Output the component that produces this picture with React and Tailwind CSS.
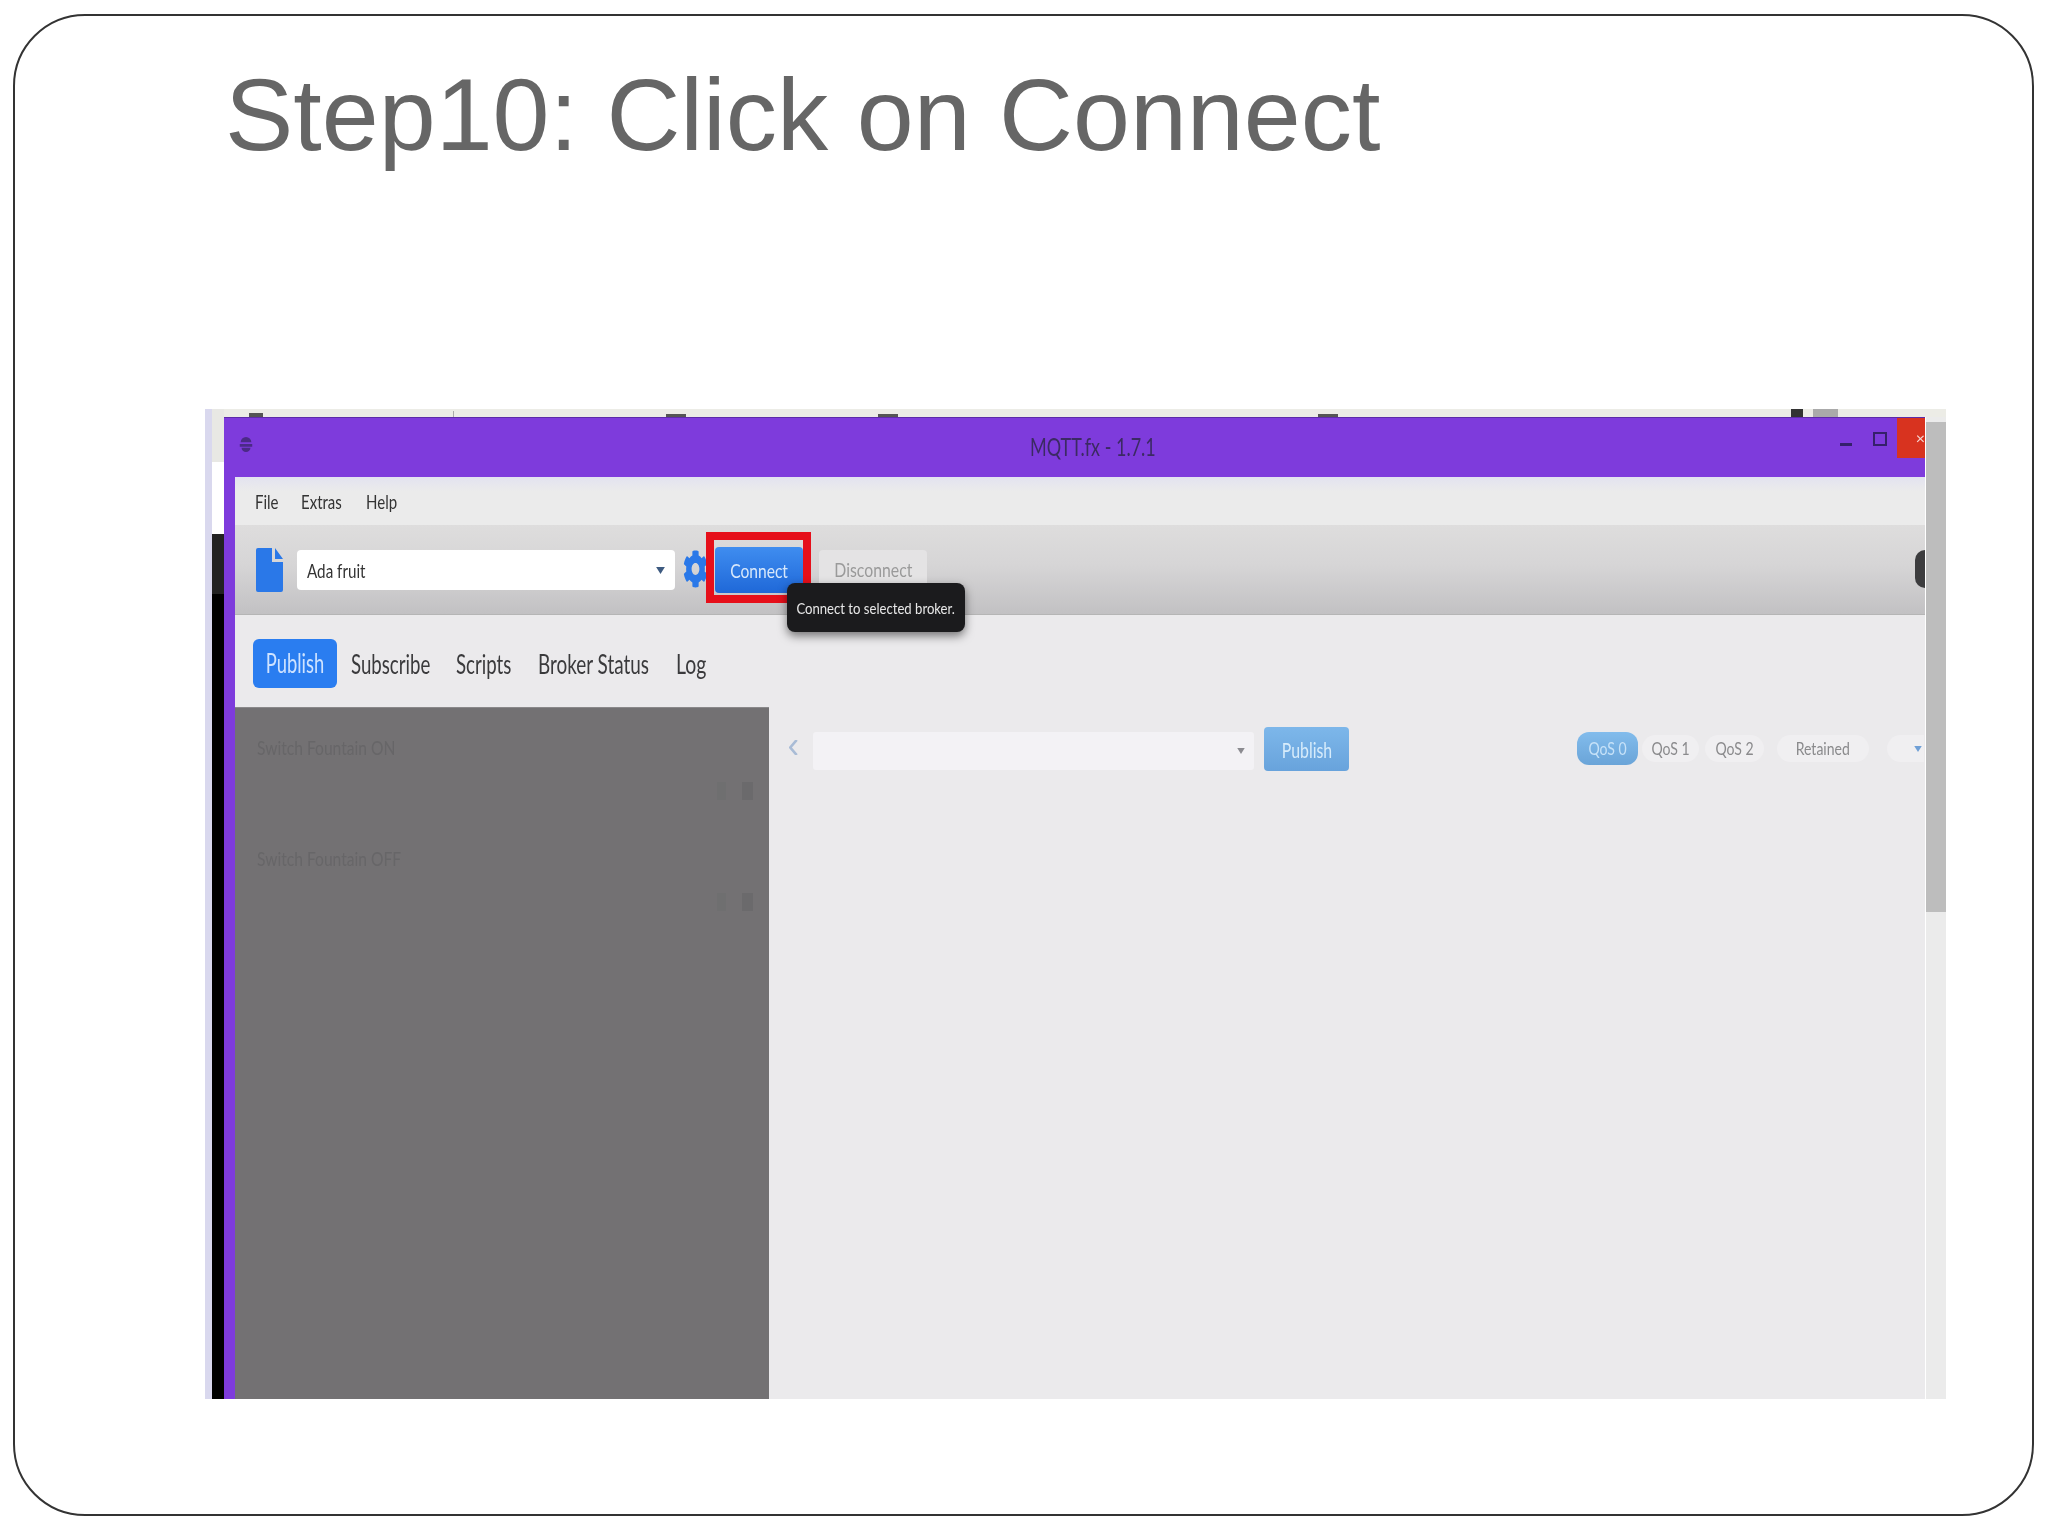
import React from 'react';
import { FaCog } from 'react-icons/fa';

const sans = "font-['Liberation_Sans',Arial,sans-serif]";
const app = "font-['Lato','Open_Sans',sans-serif]";

const Caret = ({ className }) => (
  <svg viewBox="0 0 10 8" className={className}>
    <path d="M0 0h10L5 8z" fill="currentColor" />
  </svg>
);

// the app text in the screenshot is squashed sideways, so the flow width is set by hand
const Squeezed = ({ className, children }) => (
  <span className={`inline-block whitespace-nowrap origin-left ${className}`}>{children}</span>
);

const MenuBar = () => (
  <div className="h-[48px] flex items-center pl-[20px] bg-[linear-gradient(#e3e3f0,#ebebeb_30%)] text-[20px] text-[#333]">
    <Squeezed className="w-[23px] scale-x-[0.75]">File</Squeezed>
    <Squeezed className="w-[43px] ml-[23px] scale-x-[0.75]">Extras</Squeezed>
    <Squeezed className="w-[33px] ml-[22px] scale-x-[0.75]">Help</Squeezed>
  </div>
);

const Toolbar = () => (
  <div className="relative h-[90px] flex items-start pt-[25px] bg-[linear-gradient(#dedddd,#d6d5d6_45%,#c2c1c3)] border-b border-[#b5b5b5]">
    <svg viewBox="0 0 27 44" className="w-[27px] h-[44px] ml-[21px] -mt-[2px] text-[#2a78e8]">
      <path d="M0 2q0-2 2-2h14v14h11v28q0 2-2 2H2q-2 0-2-2zM19 0l8 11h-8z" fill="currentColor" />
    </svg>
    <div className="w-[378px] h-[40px] ml-[14px] bg-white rounded-[4px] flex items-center pl-[10px] pr-[10px] text-[20px] text-[#333]">
      <Squeezed className="scale-x-[0.76]">Ada fruit</Squeezed>
      <Caret className="w-[9px] h-[7px] ml-auto text-[#3d5a80]" />
    </div>
    <FaCog preserveAspectRatio="none" className="w-[25px] h-[38px] ml-[8px] text-[#2a78e8]" />
    <div className="w-[88px] h-[46px] ml-[7px] -mt-[3px] rounded-[4px] bg-[linear-gradient(#3f8df0,#1f68d8)] flex items-center justify-center text-[20px] text-[#d8e8fb]">
      <span className="whitespace-nowrap scale-x-[0.78]">Connect</span>
    </div>
    <div className="w-[108px] h-[38px] ml-[16px] rounded-t-[4px] bg-[#e4e3e4] flex items-center justify-center text-[20px] text-[#9a9a9a]">
      <span className="whitespace-nowrap scale-x-[0.79]">Disconnect</span>
    </div>
    <div className="ml-auto w-[10px] h-[38px] rounded-l-full bg-[#3c3c3e]" />
    {/* highlight drawn over the screenshot */}
    <div className="absolute left-[471px] top-[7px] w-[105px] h-[71px] border-[8px] border-[#e60f1a]" />
    <div className="absolute left-[552px] top-[58px] w-[178px] h-[49px] rounded-[8px] bg-[#1b1b1d] shadow-[0_4px_10px_rgba(0,0,0,0.5)] flex items-center justify-center text-[16px] text-[#e8e8e8]">
      <span className="whitespace-nowrap scale-x-[0.82]">Connect to selected broker.</span>
    </div>
  </div>
);

const Tabs = () => (
  <div className="h-[92px] flex items-center pl-[18px] text-[27px] text-[#3a3a3c]">
    <div className="w-[84px] h-[49px] mt-[4px] rounded-[6px] bg-[#2a7df0] flex items-center justify-center text-[#cfe3ff]">
      <span className="whitespace-nowrap scale-x-[0.68]">Publish</span>
    </div>
    <Squeezed className="w-[80px] ml-[14px] mt-[6px] scale-x-[0.69]">Subscribe</Squeezed>
    <Squeezed className="w-[57px] ml-[25px] mt-[6px] scale-x-[0.69]">Scripts</Squeezed>
    <Squeezed className="w-[112px] ml-[25px] mt-[6px] scale-x-[0.7]">Broker Status</Squeezed>
    <Squeezed className="w-[31px] ml-[26px] mt-[6px] scale-x-[0.72]">Log</Squeezed>
  </div>
);

const MessageRow = ({ label }) => (
  <div className="h-[111px] pt-[24px] pl-[22px] pr-[16px] text-[20px] text-[#676668]">
    <Squeezed className="block scale-x-[0.78]">{label}</Squeezed>
    <div className="flex justify-end gap-[16px] mt-[20px]">
      <div className="w-[9px] h-[18px] bg-[#6f6f70]" />
      <div className="w-[11px] h-[18px] bg-[#6b6a6c]" />
    </div>
  </div>
);

const Pill = ({ children, className }) => (
  <div className={`h-[27px] rounded-full bg-[#f0eff1] flex items-center justify-center text-[18px] text-[#8a8a8c] ${className}`}>
    {children}
  </div>
);

const PublishPane = () => (
  <div className="flex-1 flex items-start pt-[20px] pr-0">
    <svg viewBox="0 0 8 14" className="w-[9px] h-[15px] ml-[20px] mt-[13px] text-[#a9bcd6]">
      <path d="M7 0L1 7l6 7" fill="none" stroke="currentColor" strokeWidth="2.5" />
    </svg>
    <div className="w-[441px] h-[38px] ml-[15px] mt-[5px] bg-[#f3f2f5] rounded-[3px] flex items-center justify-end pr-[9px]">
      <Caret className="w-[8px] h-[6px] text-[#8b8b90]" />
    </div>
    <div className="w-[85px] h-[44px] ml-[10px] rounded-[4px] bg-[linear-gradient(#7db7ea,#68a3dc)] flex items-center justify-center text-[22px] text-[#d7ecfb]">
      <span className="whitespace-nowrap scale-x-[0.72]">Publish</span>
    </div>
    <div className="flex-1 flex items-center pl-[228px] mt-[5px]">
      <div className="w-[61px] h-[33px] rounded-[12px] bg-[linear-gradient(#82bcec,#6aa4d8)] flex items-center justify-center text-[18px] text-[#c7e2f8]">
        <span className="whitespace-nowrap scale-x-[0.78]">QoS 0</span>
      </div>
      <Pill className="w-[57px] ml-[4px]"><span className="whitespace-nowrap scale-x-[0.78]">QoS 1</span></Pill>
      <Pill className="w-[59px] ml-[6px]"><span className="whitespace-nowrap scale-x-[0.78]">QoS 2</span></Pill>
      <Pill className="w-[92px] ml-[13px]"><span className="whitespace-nowrap scale-x-[0.78]">Retained</span></Pill>
      <Pill className="w-[37px] ml-[18px] rounded-r-none justify-end pr-[2px]">
        <Caret className="w-[8px] h-[6px] text-[#6f9fd6]" />
      </Pill>
    </div>
  </div>
);

const MqttWindow = () => (
  <div className="w-[1701px] h-[982px] flex flex-col bg-[#7e3bdc]">
    <div className="h-[60px] flex items-start shrink-0 border-t border-[#5d2ba8]">
      <svg viewBox="0 0 18 24" className="w-[16px] h-[24px] ml-[14px] mt-[15px] text-[#4b2a86]">
        <path d="M3 9a6 6 0 0112 0zM2 11h14v3H2zM4 15h10a5 5 0 01-10 0z" fill="currentColor" />
      </svg>
      <Squeezed className="w-[125px] ml-[776px] mt-[10px] text-[25px] scale-x-[0.72] text-[#3b2a63]">MQTT.fx - 1.7.1</Squeezed>
      <div className="ml-auto mt-[25px] w-[12px] h-[3px] bg-[#35206b]" />
      <div className="ml-[21px] mt-[14px] w-[14px] h-[14px] border-2 border-[#35206b]" />
      <div className="ml-[10px] w-[28px] h-[40px] bg-[#d8331f] flex items-start justify-end pt-[12px] text-[16px] leading-none text-[#f6d8d4]">×</div>
    </div>
    <div className="flex-1 ml-[11px] flex flex-col min-h-0 bg-[#ebeaec]">
      <MenuBar />
      <Toolbar />
      <Tabs />
      <div className="flex-1 flex min-h-0">
        <div className="w-[534px] bg-[#737173] border-t border-[#8a898b]">
          <MessageRow label="Switch Fountain ON" />
          <MessageRow label="Switch Fountain OFF" />
        </div>
        <PublishPane />
      </div>
    </div>
  </div>
);

const Screenshot = () => (
  <div className={`w-[1741px] h-[990px] ml-[190px] mt-[226px] flex blur-[0.6px] ${app}`}>
    <div className="w-[7px] bg-[#d9d8ee]" />
    <div className="w-[12px] flex flex-col">
      <div className="h-[53px] bg-[#e8e8e4]" />
      <div className="h-[72px] bg-white" />
      <div className="h-[60px] bg-[#222]" />
      <div className="flex-1 bg-black" />
    </div>
    <div className="flex-1 flex flex-col">
      <div className="h-[8px] bg-[#ecece6] flex items-end text-[0px]">
        <div className="w-[14px] h-[4px] ml-[25px] bg-[#555]" />
        <div className="w-[1px] h-[6px] ml-[190px] bg-[#aaa]" />
        <div className="w-[20px] h-[3px] ml-[212px] bg-[#555]" />
        <div className="w-[20px] h-[3px] ml-[192px] bg-[#555]" />
        <div className="w-[20px] h-[3px] ml-[420px] bg-[#555]" />
        <div className="w-[12px] h-[8px] ml-[453px] bg-[#333]" />
        <div className="w-[25px] h-[8px] ml-[10px] bg-[#aaa]" />
      </div>
      <div className="flex flex-1">
        <MqttWindow />
        <div className="flex-1 ml-[1px] flex flex-col pt-[5px] bg-[#ebebeb]">
          <div className="h-[490px] bg-[#bdbdbd]" />
        </div>
      </div>
    </div>
  </div>
);

export default function App() {
  return (
    <div className="w-[2048px] h-[1536px] bg-white pt-[14px] pl-[13px]">
      <div className="w-[2021px] h-[1502px] rounded-[72px] border-2 border-[#333] overflow-hidden">
        <div className={`h-[167px] pl-[210px] pt-[39px] text-[102.4px] leading-[120px] text-[#666] ${sans}`}>
          Step10: Click on Connect
        </div>
        <Screenshot />
      </div>
    </div>
  );
}
